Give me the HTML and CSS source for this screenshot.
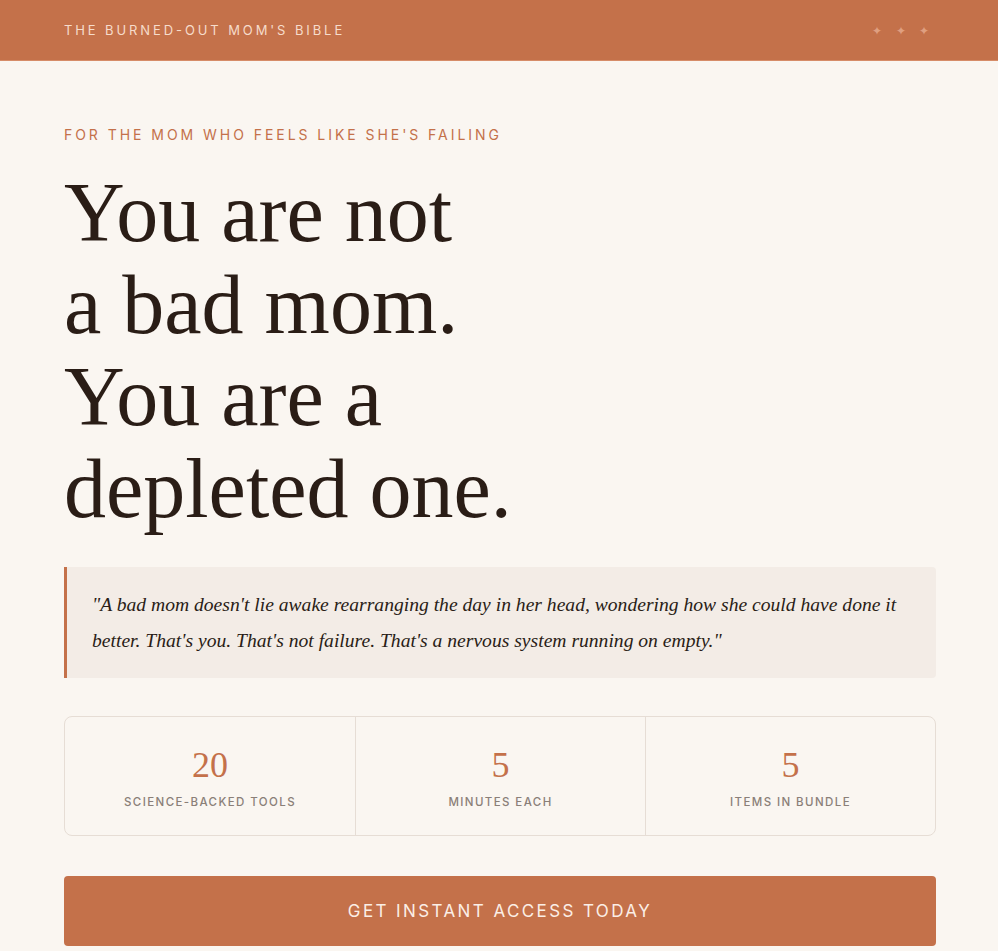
FILE: index.html
```html
<!DOCTYPE html>
<html>
<head>
  <title>The Burned-Out Mom's Bible</title>
  <link rel="stylesheet" href="styles.css">
</head>
<body>

<header class="topbar">
  <span class="brand">The Burned-Out Mom's Bible</span>
  <span class="sparkles">&#10022; &#10022; &#10022;</span>
</header>

<main class="hero">
  <p class="eyebrow">For the mom who feels like she's failing</p>

  <h1 class="headline">You are not<br>a bad mom.<br>You are a<br>depleted one.</h1>

  <blockquote class="quote">
    "A bad mom doesn't lie awake rearranging the day in her head, wondering how she could have done it better. That's you. That's not failure. That's a nervous system running on empty."
  </blockquote>

  <div class="stats">
    <div class="stat">
      <div class="stat-num">20</div>
      <div class="stat-label">Science-backed tools</div>
    </div>
    <div class="stat">
      <div class="stat-num">5</div>
      <div class="stat-label">Minutes each</div>
    </div>
    <div class="stat">
      <div class="stat-num">5</div>
      <div class="stat-label">Items in bundle</div>
    </div>
  </div>

  <a class="cta" href="#">Get instant access today</a>
</main>

</body>
</html>
```

FILE: styles.css
```css
body {
  margin: 0;
  background-color: #faf6f1;
  font-family: "Inter", "Liberation Sans", sans-serif;
  color: #2a1d16;
}

.topbar {
  height: 60px;
  background-color: #c4714a;
  border-bottom: 1px solid #d68c68;
  display: flex;
  align-items: center;
  justify-content: space-between;
  padding: 0 64px;
}

.brand {
  font-size: 13px;
  letter-spacing: 2.9px;
  text-transform: uppercase;
  color: #f6dccb;
}

.sparkles {
  font-size: 12px;
  letter-spacing: 5px;
  color: #df9f80;
  margin-right: 0;
}

.hero {
  padding: 64px 62px 0 64px;
}

.eyebrow {
  margin: 0;
  font-size: 14px;
  line-height: 20px;
  letter-spacing: 2.95px;
  text-transform: uppercase;
  color: #c4714a;
}

.headline {
  margin: 22px 0 0 0;
  font-family: "Liberation Serif", "DejaVu Serif", serif;
  font-weight: normal;
  font-size: 84px;
  line-height: 92px;
  color: #2a1d16;
}

.quote {
  margin: 32px 0 0 0;
  padding: 20px 16px 19px 25px;
  background-color: #f3ece6;
  border-left: 3px solid #c4714a;
  border-radius: 0 4px 4px 0;
  font-family: "Liberation Serif", "DejaVu Serif", serif;
  font-style: italic;
  font-size: 19.6px;
  line-height: 36px;
  color: #2a1d16;
}

.stats {
  margin-top: 38px;
  display: grid;
  grid-template-columns: 1fr 1fr 1fr;
  border: 1px solid #e6ddd5;
  border-radius: 8px;
}

.stat {
  text-align: center;
  padding: 28px 10px 26px 10px;
}

.stat + .stat {
  border-left: 1px solid #e6ddd5;
}

.stat-num {
  font-family: "Liberation Serif", "DejaVu Serif", serif;
  font-size: 36px;
  line-height: 40px;
  color: #c4714a;
}

.stat-label {
  margin-top: 10px;
  font-size: 11.5px;
  font-weight: 500;
  letter-spacing: 1.4px;
  text-transform: uppercase;
  color: #8a7f78;
}

.cta {
  display: block;
  margin-top: 40px;
  height: 70px;
  line-height: 70px;
  background-color: #c4714a;
  border-radius: 4px;
  text-align: center;
  text-decoration: none;
  font-size: 17px;
  letter-spacing: 2.4px;
  text-transform: uppercase;
  color: #fbeee6;
}
```
